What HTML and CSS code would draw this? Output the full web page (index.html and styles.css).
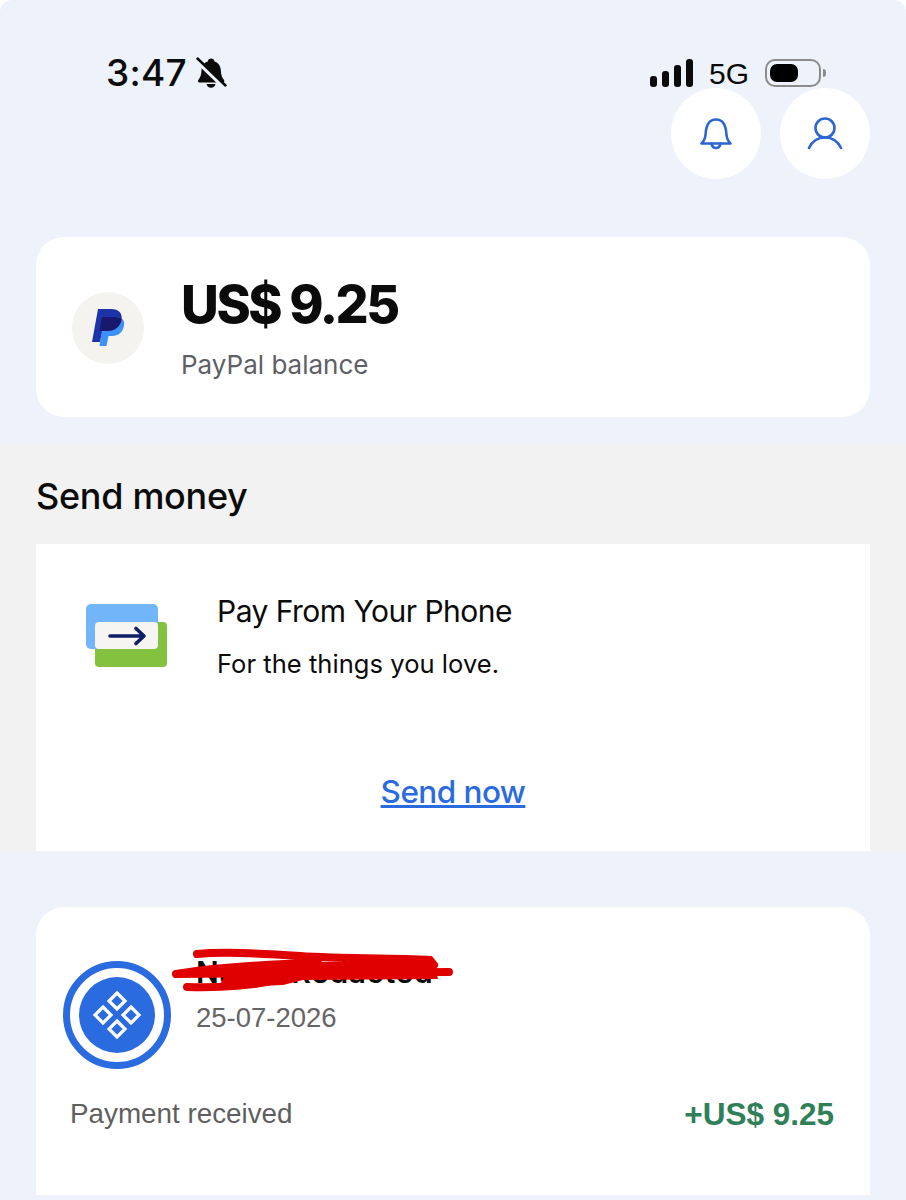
FILE: index.html
```html
<!DOCTYPE html>
<html lang="en">
<head>
<meta charset="UTF-8">
<meta name="viewport" content="width=device-width, initial-scale=1.0">
<title>PayPal</title>
<link rel="stylesheet" href="styles.css">
</head>
<body>

<div class="page">
    <div class="top">
        <div class="status">
            <div class="status-left">
                <span class="time">3:47</span>
                <svg class="bell-off" width="32" height="32" viewBox="0 0 32 32">
                    <path d="M16 1.500c2 0 3.300 1.300 3.500 3 4 1.300 6 4.500 6.300 8.500.2 4 .8 7 3.200 10 .8 1 .3 2.500-1.200 2.500H4.500c-1.500 0-2-1.500-1.200-2.500 2.400-3 3-6 3.200-10 .3-4 2.300-7.200 6.300-8.500.2-1.700 1.500-3 3.200-3z" fill="#0b0b0b"/>
                    <path d="M11.500 27h9c-.4 2.300-2.200 3.800-4.500 3.800s-4.100-1.500-4.500-3.800z" fill="#0b0b0b"/>
                    <path d="M2 3.500l28 27" stroke="#eef2fa" stroke-width="5"/>
                    <path d="M2.500 1.500l28 27" stroke="#0b0b0b" stroke-width="2.500" stroke-linecap="round"/>
                </svg>
            </div>
            <div class="status-right">
                <div class="signal">
                    <span class="bar bar-1"></span>
                    <span class="bar bar-2"></span>
                    <span class="bar bar-3"></span>
                    <span class="bar bar-4"></span>
                </div>
                <span class="network">5G</span>
                <div class="battery"><span class="battery-level"></span></div>
                <span class="battery-cap"></span>
            </div>
        </div>

        <div class="actions">
            <div class="round-btn">
                <svg width="34" height="34" viewBox="0 0 34 34" fill="none" stroke="#2d66cf" stroke-width="2.600" stroke-linejoin="round" stroke-linecap="round">
                    <path d="M2.500 26.500c2.500-2.500 3.800-5 4.100-9.500.4-7 2.800-14.500 10.400-14.500s10 7.500 10.400 14.500c.3 4.500 1.600 7 4.100 9.500z"/>
                    <path d="M12.500 26.500c.4 2.800 2.200 4.500 4.500 4.500s4.100-1.700 4.500-4.500"/>
                </svg>
            </div>
            <div class="round-btn">
                <svg width="36" height="34" viewBox="0 0 36 34" fill="none" stroke="#2d66cf" stroke-width="2.600" stroke-linecap="round">
                    <circle cx="18" cy="11" r="9.500"/>
                    <path d="M2 31c3-6.500 9-10.500 16-10.500S31 24.500 34 31"/>
                </svg>
            </div>
        </div>

        <div class="card balance-card">
            <div class="pp-badge">
                <svg width="33" height="38" viewBox="0 0 33 38">
                    <path d="M6 0h13c8 0 11.500 4.500 10.500 10.500C28.500 18 23 22 16 22h-5.500L8 33H0z" fill="#1d34a8"/>
                    <path d="M12 8h12c6 0 9 3.500 8 8.500C31 23 26.500 27 20 27h-3.500L14.500 37H7.500z" fill="#3c90f8"/>
                    <path d="M9.800 8H24c2.600 0 4.500.7 5.800 1.800C28.800 17.700 23 22 16 22h-5.500l-3.100.3z" fill="#17186e"/>
                </svg>
            </div>
            <div>
                <div class="balance">US$ 9.25</div>
                <div class="balance-label">PayPal balance</div>
            </div>
        </div>
    </div>

    <div class="send-section">
        <h2 class="section-title">Send money</h2>
        <div class="send-card">
            <div class="promo">
                <svg class="promo-icon" width="84" height="66" viewBox="0 0 84 66">
                    <rect x="9" y="18" width="72" height="45" rx="4" fill="#84c13e"/>
                    <rect y="0" width="72" height="45" rx="5" fill="#72b5f9"/>
                    <rect x="9" y="18" width="63" height="27" rx="4" fill="#f7f5f2"/>
                    <path d="M24 32h34M50 24.500l8 7.500-8 7.500" fill="none" stroke="#0f1f66" stroke-width="3.600" stroke-linecap="round" stroke-linejoin="round"/>
                </svg>
                <div>
                    <div class="promo-title">Pay From Your Phone</div>
                    <div class="promo-text">For the things you love.</div>
                </div>
            </div>
            <a class="send-link" href="#">Send now</a>
        </div>
    </div>

    <div class="bottom">
        <div class="tx-card">
            <div class="tx-head">
                <svg width="108" height="108" viewBox="0 0 108 108">
                    <circle cx="54" cy="54" r="50.500" fill="#fff" stroke="#2b6be0" stroke-width="7"/>
                    <circle cx="54" cy="54" r="38" fill="#2b6be0"/>
                    <g fill="none" stroke="#fff" stroke-width="3.200">
                        <path d="M54 32l8 8-8 8-8-8z"/>
                        <path d="M54 60l8 8-8 8-8-8z"/>
                        <path d="M40 46l8 8-8 8-8-8z"/>
                        <path d="M68 46l8 8-8 8-8-8z"/>
                    </g>
                </svg>
                <div class="tx-info">
                    <div class="tx-name">Name Redacted</div>
                    <div class="tx-date">25-07-2026</div>
                    <!-- red marker over the name -->
                    <svg class="scribble" width="300" height="50" viewBox="0 0 300 50">
                        <path d="M60 22L85 15 265 12 270 31 135 32 115 37 50 40z" fill="#e00000"/>
                        <path d="M29 6C50 4 90 5 132 8S240 10 262 12l4 5M8 26C50 19 110 16 150 15M8 26C100 25 200 24 281 24M19 39C50 40 90 38 115 30" fill="none" stroke="#e00000" stroke-width="8" stroke-linecap="round"/>
                    </svg>
                </div>
            </div>
            <div class="tx-foot">
                <span class="tx-type">Payment received</span>
                <span class="tx-amount">+US$ 9.25</span>
            </div>
        </div>
    </div>
</div>

</body>
</html>
```

FILE: styles.css
```css
body {
    margin: 0;
    background-color: #fff;
    font-family: Inter, sans-serif;
    color: #0b0b0b;
}
.page {
    width: 906px;
    height: 1200px;
    overflow: hidden;
    border-radius: 12px 12px 0 0;
}
.top {
    height: 444px;
    box-sizing: border-box;
    padding: 54px 36px 0;
    background-color: #eef2fa;
}
.status {
    display: flex;
    justify-content: space-between;
    height: 34px;
}
.status-left {
    display: flex;
    align-items: center;
    gap: 8px;
    padding-left: 70px;
    padding-top: 4px;
}
.time {
    font-size: 37px;
    font-weight: 500;
    line-height: 38px;
    letter-spacing: 0.300px;
}
.status-right {
    display: flex;
    align-items: center;
    padding-right: 44px;
}
.signal {
    display: flex;
    align-items: flex-end;
    gap: 5px;
    height: 28px;
    margin-top: 4px;
    margin-right: 1px;
}
.bar {
    width: 7px;
    border-radius: 3px;
    background-color: #0b0b0b;
}
.bar-1 { height: 11px; }
.bar-2 { height: 16px; }
.bar-3 { height: 22px; }
.bar-4 { height: 28px; }
.network {
    margin-left: 15px;
    font-family: "Liberation Sans", sans-serif;
    font-size: 30px;
    line-height: 34px;
    margin-top: 6px;
}
.battery {
    box-sizing: border-box;
    width: 56px;
    height: 28px;
    margin-left: 16px;
    margin-top: 4px;
    padding: 3px;
    border: 2px solid #8b8b8b;
    border-radius: 10px;
}
.battery-level {
    display: block;
    width: 28px;
    height: 100%;
    border-radius: 7px;
    background-color: #000;
}
.battery-cap {
    width: 3px;
    height: 8px;
    margin-left: 2px;
    margin-top: 4px;
    border-radius: 0 3px 3px 0;
    background-color: #8b8b8b;
}
.actions {
    display: flex;
    justify-content: flex-end;
    gap: 19px;
}
.round-btn {
    display: flex;
    align-items: center;
    justify-content: center;
    width: 90px;
    height: 91px;
    border-radius: 50%;
    background-color: #fff;
}
.card {
    background-color: #fff;
    border-radius: 28px;
}
.balance-card {
    display: flex;
    align-items: center;
    gap: 37px;
    height: 180px;
    margin-top: 58px;
    padding-left: 36px;
    padding-top: 2px;
    box-sizing: border-box;
}
.pp-badge {
    display: flex;
    align-items: center;
    justify-content: center;
    width: 72px;
    height: 72px;
    border-radius: 50%;
    background-color: #f5f3ef;
}
.balance {
    font-size: 52px;
    font-weight: 800;
    line-height: 60px;
    letter-spacing: -2.400px;
}
.balance-label {
    margin-top: 13px;
    font-size: 26px;
    line-height: 34px;
    color: #5d6066;
}
.send-section {
    height: 408px;
    box-sizing: border-box;
    padding: 28px 36px 0;
    background-color: #f2f2f2;
}
.section-title {
    margin: 0;
    font-size: 36px;
    font-weight: 500;
    line-height: 48px;
    letter-spacing: -0.300px;
}
.send-card {
    height: 307px;
    margin-top: 24px;
    box-sizing: border-box;
    padding-top: 47px;
    background-color: #fff;
    text-align: center;
}
.promo {
    display: flex;
    gap: 47px;
    padding-left: 50px;
    text-align: left;
}
.promo-icon {
    margin-top: 13px;
    flex-shrink: 0;
}
.promo-title {
    font-size: 30px;
    line-height: 40px;
    letter-spacing: -0.520px;
}
.promo-text {
    margin-top: 16px;
    font-size: 25.500px;
    line-height: 34px;
    letter-spacing: 0.050px;
}
.send-link {
    display: inline-block;
    margin-top: 90px;
    font-size: 31.500px;
    font-weight: 500;
    line-height: 42px;
    letter-spacing: -0.550px;
    color: #2b6be0;
}
.bottom {
    height: 348px;
    box-sizing: border-box;
    padding: 55px 36px 0;
    background-color: #eef2fa;
}
.tx-card {
    height: 288px;
    box-sizing: border-box;
    padding: 54px 36px 0 27px;
    background-color: #fff;
    border-radius: 28px 28px 0 0;
}
.tx-head {
    display: flex;
    gap: 25px;
}
.tx-info {
    position: relative;
}
.tx-name {
    margin-top: -4px;
    font-size: 30px;
    font-weight: 600;
    line-height: 30px;
    letter-spacing: 0.600px;
}
.tx-date {
    margin-top: 14px;
    font-family: "Liberation Sans", sans-serif;
    font-size: 27.500px;
    line-height: 34px;
    color: #656565;
}
.scribble {
    position: absolute;
    left: -28px;
    top: -13px;
}
.tx-foot {
    display: flex;
    justify-content: space-between;
    align-items: center;
    margin-top: 28px;
    padding-left: 7px;
}
.tx-type {
    font-family: "Liberation Sans", sans-serif;
    font-size: 27.800px;
    line-height: 34px;
    color: #5f5f5f;
}
.tx-amount {
    font-family: "Liberation Sans", sans-serif;
    font-size: 31.500px;
    font-weight: 700;
    line-height: 34px;
    color: #2f8058;
}
```
